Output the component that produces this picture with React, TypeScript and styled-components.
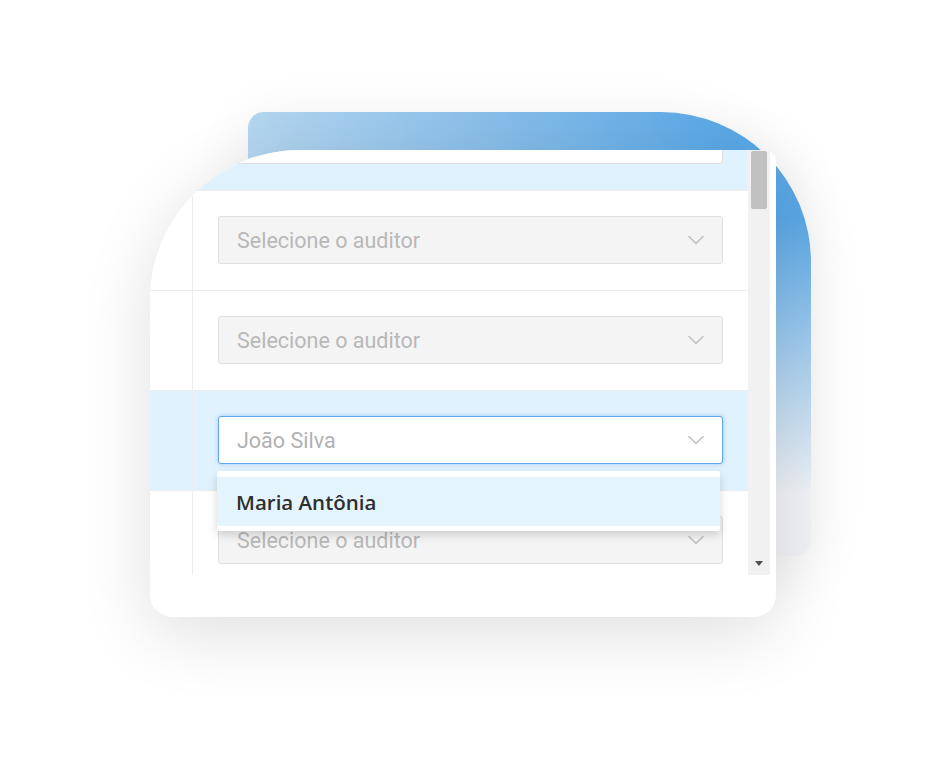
import styled, { createGlobalStyle } from "styled-components";

const GlobalStyle = createGlobalStyle`
  html, body {
    margin: 0;
    padding: 0;
    background: #ffffff;
  }
  * {
    box-sizing: border-box;
  }
`;

type RowData = {
  value?: string;
  tone: "filled" | "empty" | "active";
  highlight?: boolean;
};

const rows: RowData[] = [
  { value: "Maria Antônia", tone: "filled", highlight: true },
  { tone: "empty" },
  { tone: "empty" },
  { value: "João Silva", tone: "active", highlight: true },
  { tone: "empty" },
];

const Chevron = () => (
  <svg width="16" height="10" viewBox="0 0 16 10" fill="none">
    <polyline
      points="1,1.5 8,8.5 15,1.5"
      stroke="#c2c2c2"
      strokeWidth="1.6"
      strokeLinejoin="round"
      strokeLinecap="round"
    />
  </svg>
);

const App = () => {
  return (
    <Page>
      <GlobalStyle />
      <Stage>
        <Backdrop />
        <Card>
          <TableArea>
            <Rows>
              {rows.map((row, i) => (
                <Row key={i} $highlight={!!row.highlight}>
                  <LeadCell />
                  <FieldCell>
                    <Select $tone={row.tone}>
                      <SelectText $hasValue={!!row.value}>
                        {row.value ?? "Selecione o auditor"}
                      </SelectText>
                      <Chevron />
                    </Select>
                    {row.tone === "active" && (
                      <Dropdown>
                        <Option>Maria Antônia</Option>
                      </Dropdown>
                    )}
                  </FieldCell>
                </Row>
              ))}
            </Rows>
          </TableArea>
          <Scrollbar>
            <Thumb />
            <ArrowDown />
          </Scrollbar>
        </Card>
      </Stage>
    </Page>
  );
};

const Page = styled.div`
  width: 926px;
  height: 768px;
  padding: 112px 0 0 150px;
  overflow: hidden;
  background: #ffffff;
`;

const Stage = styled.div`
  display: grid;
  grid-template-columns: auto;
  grid-template-rows: auto;
  align-items: start;
  justify-items: start;
`;

const Backdrop = styled.div`
  grid-area: 1 / 1;
  margin-left: 98px;
  width: 563px;
  height: 444px;
  border-radius: 16px 150px 16px 16px;
  background: linear-gradient(
      180deg,
      rgba(241, 243, 246, 0) 24%,
      rgba(241, 243, 246, 0.55) 58%,
      rgba(240, 242, 245, 1) 86%
    ),
    linear-gradient(90deg, #b4d6f0 0%, #8cc0ea 40%, #5aa8e6 85%);
  box-shadow: 0 12px 60px rgba(0, 0, 0, 0.08);
`;

const Card = styled.div`
  grid-area: 1 / 1;
  position: relative;
  margin-top: 38px;
  width: 626px;
  height: 467px;
  display: flex;
  padding: 0 6px 42px 0;
  background: #ffffff;
  border-radius: 150px 12px 22px 22px;
  overflow: hidden;
  box-shadow: 0 16px 70px rgba(0, 0, 0, 0.13);
`;

const TableArea = styled.div`
  flex: 1;
  height: 100%;
  overflow: hidden;
`;

const Rows = styled.div`
  margin-top: -59px;
`;

const Row = styled.div<{ $highlight: boolean }>`
  display: grid;
  grid-template-columns: 43px 1fr;
  height: 100px;
  border-bottom: 1px solid #ececec;
  background: ${(p) => (p.$highlight ? "#e0f2fd" : "#ffffff")};
`;

const LeadCell = styled.div`
  border-right: 1px solid #ececec;
`;

const FieldCell = styled.div`
  position: relative;
  padding: 25px 25px 0 25px;
`;

const Select = styled.div<{ $tone: RowData["tone"] }>`
  height: 48px;
  display: flex;
  align-items: center;
  justify-content: space-between;
  padding: 0 18px 0 18px;
  border-radius: 3px;
  background: ${(p) => (p.$tone === "empty" ? "#f4f4f4" : "#ffffff")};
  border: ${(p) =>
    p.$tone === "active" ? "1.5px solid #5ea6e9" : "1px solid #dedede"};
  box-shadow: ${(p) =>
    p.$tone === "active" ? "0 0 4px rgba(94, 166, 233, 0.55)" : "none"};
`;

const SelectText = styled.span<{ $hasValue: boolean }>`
  font-family: Roboto, "Liberation Sans", sans-serif;
  font-size: 21.5px;
  color: ${(p) => (p.$hasValue ? "#b1b1b1" : "#b8b8b8")};
`;

const Dropdown = styled.div`
  position: absolute;
  z-index: 2;
  top: 80px;
  left: 24px;
  width: 503px;
  padding: 6px 0 5px;
  background: #ffffff;
  border-radius: 2px;
  box-shadow: 0 4px 10px rgba(0, 0, 0, 0.16);
`;

const Option = styled.div`
  height: 49px;
  display: flex;
  align-items: center;
  padding-left: 19px;
  background: #e3f4fd;
  font-family: "Open Sans", "Noto Sans", sans-serif;
  font-weight: 600;
  font-size: 20.5px;
  color: #2e2e2e;
`;

const Scrollbar = styled.div`
  width: 22px;
  height: 100%;
  display: flex;
  flex-direction: column;
  align-items: center;
  justify-content: space-between;
  padding: 1px 3px 9px;
  background: #f1f1f1;
`;

const Thumb = styled.div`
  width: 16px;
  height: 58px;
  border-radius: 2px;
  background: #c1c1c1;
`;

const ArrowDown = styled.div`
  width: 0;
  height: 0;
  border-left: 4px solid transparent;
  border-right: 4px solid transparent;
  border-top: 5px solid #505050;
`;

export default App;
